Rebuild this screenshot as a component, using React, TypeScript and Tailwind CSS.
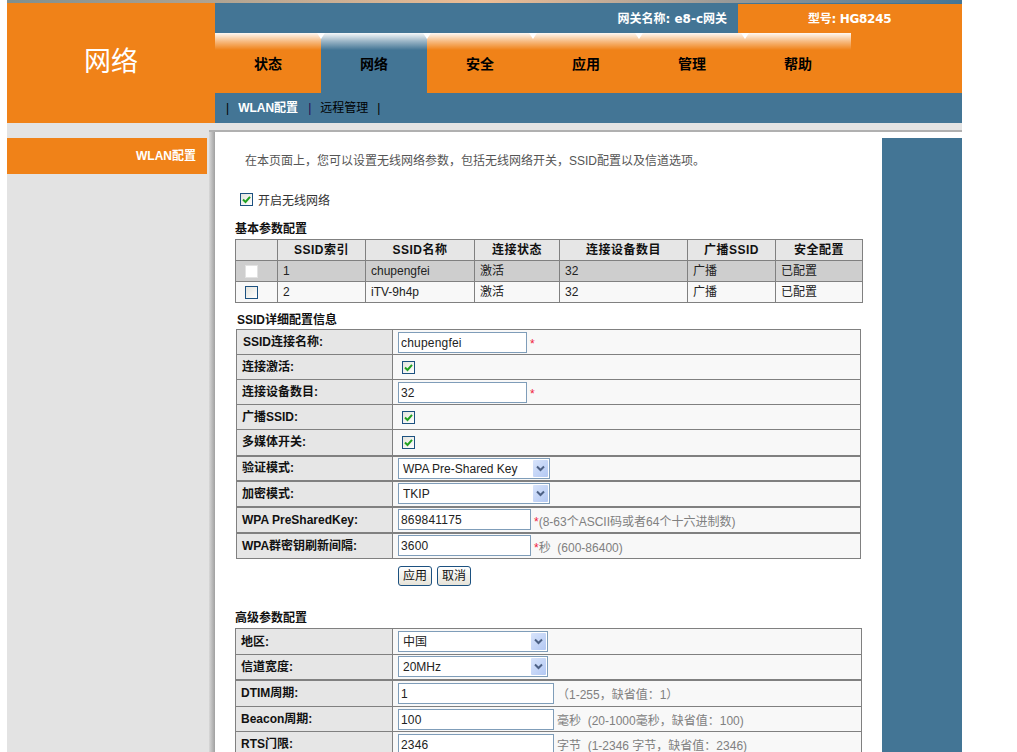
import type { ReactNode } from 'react';

const TABS = ['状态', '网络', '安全', '应用', '管理', '帮助'];
const font = 'font-["Liberation_Sans","Noto_Sans_CJK_SC",sans-serif]';
const wideFont = 'font-["DejaVu_Sans","Noto_Sans_CJK_SC",sans-serif]';

function Check({ on = true, muted = false }: { on?: boolean; muted?: boolean }) {
  return (
    <span
      className={`flex h-[13px] w-[13px] items-center justify-center border ${
        muted ? 'border-[#e2e2e2] bg-white' : 'border-[#1c5180] bg-gradient-to-br from-[#e4e4de] to-white'
      }`}
    >
      {on && (
        <svg width="9" height="9" viewBox="0 0 9 9" fill="none">
          <path d="M1 4.5 L3.5 7 L8 1.8" stroke="#21a121" strokeWidth="2" />
        </svg>
      )}
    </span>
  );
}

function TextBox({ value, width }: { value: string; width: string }) {
  return (
    <input
      readOnly
      defaultValue={value}
      className={`h-[21px] ${width} border border-[#7f9db9] bg-white px-[2px] pt-px text-[12px] tracking-[0.2px] text-[#222] outline-none`}
    />
  );
}

function Dropdown({ value, width }: { value: string; width: string }) {
  return (
    <span className={`relative block h-[21px] ${width}`}>
      <select
        defaultValue={value}
        className="h-full w-full appearance-none border border-[#7f9db9] bg-white pt-px pl-[4px] text-[12px] text-[#222] outline-none"
      >
        <option>{value}</option>
      </select>
      <span className="absolute top-[2px] right-[2px] flex h-[17px] w-[15px] items-center justify-center rounded-[1px] bg-gradient-to-br from-[#d8e4fb] to-[#b3c8f3]">
        <svg width="9" height="7" viewBox="0 0 9 7" fill="none">
          <path d="M1 1.5 L4.5 5 L8 1.5" stroke="#4d6185" strokeWidth="2" />
        </svg>
      </span>
    </span>
  );
}

function Hint({ children }: { children: ReactNode }) {
  return <span className="ml-[3px] pt-[4px] text-[12px] whitespace-nowrap text-[#808080]">{children}</span>;
}

function Star() {
  return <span className="text-[12px] text-[#f0203c]">*</span>;
}

function FormRow({
  label,
  height,
  thick,
  indent = 'pl-[5px]',
  children,
}: {
  label: string;
  height: string;
  thick?: boolean;
  indent?: string;
  children: ReactNode;
}) {
  const edge = thick ? 'border-b-[2px]' : 'border-b';
  return (
    <tr className={height}>
      <td className={`border border-[#808080] ${edge} bg-[#e6e6e6] ${indent} text-[12px] font-bold text-[#111]`}>{label}</td>
      <td className={`border border-[#808080] ${edge} bg-[#f8f8f8] pl-[5px]`}>
        <div className="flex items-center">{children}</div>
      </td>
    </tr>
  );
}

function SsidRow({ idx, name, tone, muted }: { idx: string; name: string; tone: string; muted?: boolean }) {
  const cell = 'border border-[#808080] pl-[5px] text-[12px] text-[#222]';
  return (
    <tr className={`h-[21px] ${tone}`}>
      <td className="border border-[#808080] pl-[9px]">
        <Check on={false} muted={muted} />
      </td>
      <td className={cell}>{idx}</td>
      <td className={cell}>{name}</td>
      <td className={cell}>激活</td>
      <td className={cell}>32</td>
      <td className={cell}>广播</td>
      <td className={cell}>已配置</td>
    </tr>
  );
}

export default function App() {
  return (
    <div className={`h-[752px] w-[962px] overflow-hidden bg-white pl-[7px] ${font}`}>
      <div className="h-[3px] bg-gradient-to-r from-[#7f8f8f] via-[#eebd94] to-[#437595]" />

      <header className="flex h-[120px]">
        <div className="flex w-[208px] items-center justify-center bg-[#f08218] pb-[2px] text-[27px] text-white">网络</div>
        <div className="flex flex-1 flex-col">
          <div className={`flex h-[30px] bg-[#437595] pt-[1px] text-[12px] font-bold text-white ${wideFont}`}>
            <div className="flex flex-1 items-center justify-end pr-[11px]">网关名称: e8-c网关</div>
            <div className="flex w-[224px] items-center bg-[#f08218] pl-[70px] tracking-[-0.3px]">型号: HG8245</div>
          </div>
          <nav className="flex h-[60px] bg-[#f08218]">
            {TABS.map((tab, i) => (
              <div
                key={tab}
                className={`relative flex w-[106px] items-center justify-center pt-[2px] text-[14px] font-bold text-black ${
                  i === 1 ? 'bg-[#437595]' : ''
                }`}
              >
                <span className="absolute inset-x-0 top-0 h-[17px] bg-gradient-to-b from-white/95 via-white/45 to-transparent" />
                {i > 0 && (
                  <span className="absolute top-0 left-[-4px] h-[6px] w-[8px] bg-white [clip-path:polygon(0_0,100%_0,50%_100%)]" />
                )}
                {tab}
              </div>
            ))}
          </nav>
          <div className="flex h-[30px] items-center bg-[#437595] pl-[11px] text-[12px] text-black">
            <span>|</span>
            <span className="ml-[9px] font-bold text-white">WLAN配置</span>
            <span className="ml-[10px] text-[#2a0a50]">|</span>
            <span className="ml-[9px]">远程管理</span>
            <span className="ml-[9px]">|</span>
          </div>
        </div>
      </header>

      <div className="flex h-[629px] bg-[#e3e3e3]">
        <aside className="w-[202px] pt-[15px]">
          <div className="flex h-[36px] w-[200px] items-center justify-end bg-[#f08218] pr-[11px] text-[12px] font-bold text-white">
            WLAN配置
          </div>
        </aside>

        <div className="flex flex-1 flex-col pt-[7px]">
          <div className="flex flex-1 border-t-2 border-[#b0b0b0]">
            <div className="w-[6px] bg-gradient-to-r from-[#d8d8d8] to-[#a0a0a0]" />
            <main className="flex w-[667px] flex-col bg-white pl-[20px] text-[12px]">
              <p className="mt-[23px] ml-[10px] h-[12px] leading-[12px] text-[#555]">
                在本页面上，您可以设置无线网络参数，包括无线网络开关，SSID配置以及信道选项。
              </p>
              <label className="mt-[26px] ml-[5px] flex h-[13px] items-center gap-[5px] text-[#333]">
                <Check />
                <span className="pt-[2px]">开启无线网络</span>
              </label>

              <h3 className="mt-[15px] h-[17px] leading-[17px] font-bold text-[#111]">基本参数配置</h3>
              <table className="mt-[1px] w-[627px] table-fixed border-collapse">
                <colgroup>
                  <col className="w-[42px]" />
                  <col className="w-[88px]" />
                  <col className="w-[109px]" />
                  <col className="w-[85px]" />
                  <col className="w-[128px]" />
                  <col className="w-[88px]" />
                  <col className="w-[87px]" />
                </colgroup>
                <thead>
                  <tr className="h-[21px] bg-[#e6e6e6] text-[12px] font-bold text-[#111]">
                    {['', 'SSID索引', 'SSID名称', '连接状态', '连接设备数目', '广播SSID', '安全配置'].map((h) => (
                      <th key={h} className="border border-[#808080] tracking-[0.5px]">
                        {h}
                      </th>
                    ))}
                  </tr>
                </thead>
                <tbody>
                  <SsidRow idx="1" name="chupengfei" tone="bg-[#cecece]" muted />
                  <SsidRow idx="2" name="iTV-9h4p" tone="bg-[#f8f8f8]" />
                </tbody>
              </table>

              <h3 className="mt-[9px] ml-[2px] h-[16px] leading-[16px] font-bold text-[#111]">SSID详细配置信息</h3>
              <table className="mt-px ml-px w-[625px] table-fixed border-collapse">
                <colgroup>
                  <col className="w-[156px]" />
                  <col />
                </colgroup>
                <tbody>
                  <FormRow label="SSID连接名称:" height="h-[25px]" indent="pl-[6px]">
                    <TextBox value="chupengfei" width="w-[129px]" />
                    <span className="ml-[3px] pt-[3px]">
                      <Star />
                    </span>
                  </FormRow>
                  <FormRow label="连接激活:" height="h-[25px]">
                    <span className="ml-[4px]">
                      <Check />
                    </span>
                  </FormRow>
                  <FormRow label="连接设备数目:" height="h-[25px]">
                    <TextBox value="32" width="w-[129px]" />
                    <span className="ml-[3px] pt-[3px]">
                      <Star />
                    </span>
                  </FormRow>
                  <FormRow label="广播SSID:" height="h-[25px]">
                    <span className="ml-[4px]">
                      <Check />
                    </span>
                  </FormRow>
                  <FormRow label="多媒体开关:" height="h-[26px]" thick>
                    <span className="ml-[4px]">
                      <Check />
                    </span>
                  </FormRow>
                  <FormRow label="验证模式:" height="h-[25px]" thick>
                    <Dropdown value="WPA Pre-Shared Key" width="w-[152px]" />
                  </FormRow>
                  <FormRow label="加密模式:" height="h-[26px]" thick>
                    <Dropdown value="TKIP" width="w-[152px]" />
                  </FormRow>
                  <FormRow label="WPA PreSharedKey:" height="h-[26px]" thick>
                    <TextBox value="869841175" width="w-[133px]" />
                    <Hint>
                      <Star />
                      (8-63个ASCII码或者64个十六进制数)
                    </Hint>
                  </FormRow>
                  <FormRow label="WPA群密钥刷新间隔:" height="h-[26px]">
                    <TextBox value="3600" width="w-[133px]" />
                    <Hint>
                      <Star />秒&nbsp;&nbsp;(600-86400)
                    </Hint>
                  </FormRow>
                </tbody>
              </table>

              <div className="mt-[7px] ml-[163px] flex gap-[5px]">
                {['应用', '取消'].map((b) => (
                  <button
                    key={b}
                    className="h-[20px] w-[34px] rounded-[3px] border border-[#1c5180] bg-gradient-to-b from-white to-[#e6e3d8] pb-px text-[12px] text-[#111]"
                  >
                    {b}
                  </button>
                ))}
              </div>

              <h3 className="mt-[24px] h-[17px] leading-[17px] font-bold text-[#111]">高级参数配置</h3>
              <table className="mt-px w-[627px] table-fixed border-collapse">
                <colgroup>
                  <col className="w-[157px]" />
                  <col />
                </colgroup>
                <tbody>
                  <FormRow label="地区:" height="h-[26px]">
                    <Dropdown value="中国" width="w-[150px]" />
                  </FormRow>
                  <FormRow label="信道宽度:" height="h-[25px]" thick>
                    <Dropdown value="20MHz" width="w-[150px]" />
                  </FormRow>
                  <FormRow label="DTIM周期:" height="h-[27px]">
                    <TextBox value="1" width="w-[156px]" />
                    <Hint>（1-255，缺省值：1）</Hint>
                  </FormRow>
                  <FormRow label="Beacon周期:" height="h-[25px]">
                    <TextBox value="100" width="w-[156px]" />
                    <Hint>毫秒&nbsp;&nbsp;(20-1000毫秒，缺省值：100)</Hint>
                  </FormRow>
                  <FormRow label="RTS门限:" height="h-[25px]">
                    <TextBox value="2346" width="w-[156px]" />
                    <Hint>字节&nbsp;&nbsp;(1-2346 字节，缺省值：2346)</Hint>
                  </FormRow>
                </tbody>
              </table>
            </main>
            <div className="flex w-[80px] flex-col bg-white pt-[6px]">
              <div className="flex-1 bg-[#437595]" />
            </div>
          </div>
        </div>
      </div>
    </div>
  );
}
